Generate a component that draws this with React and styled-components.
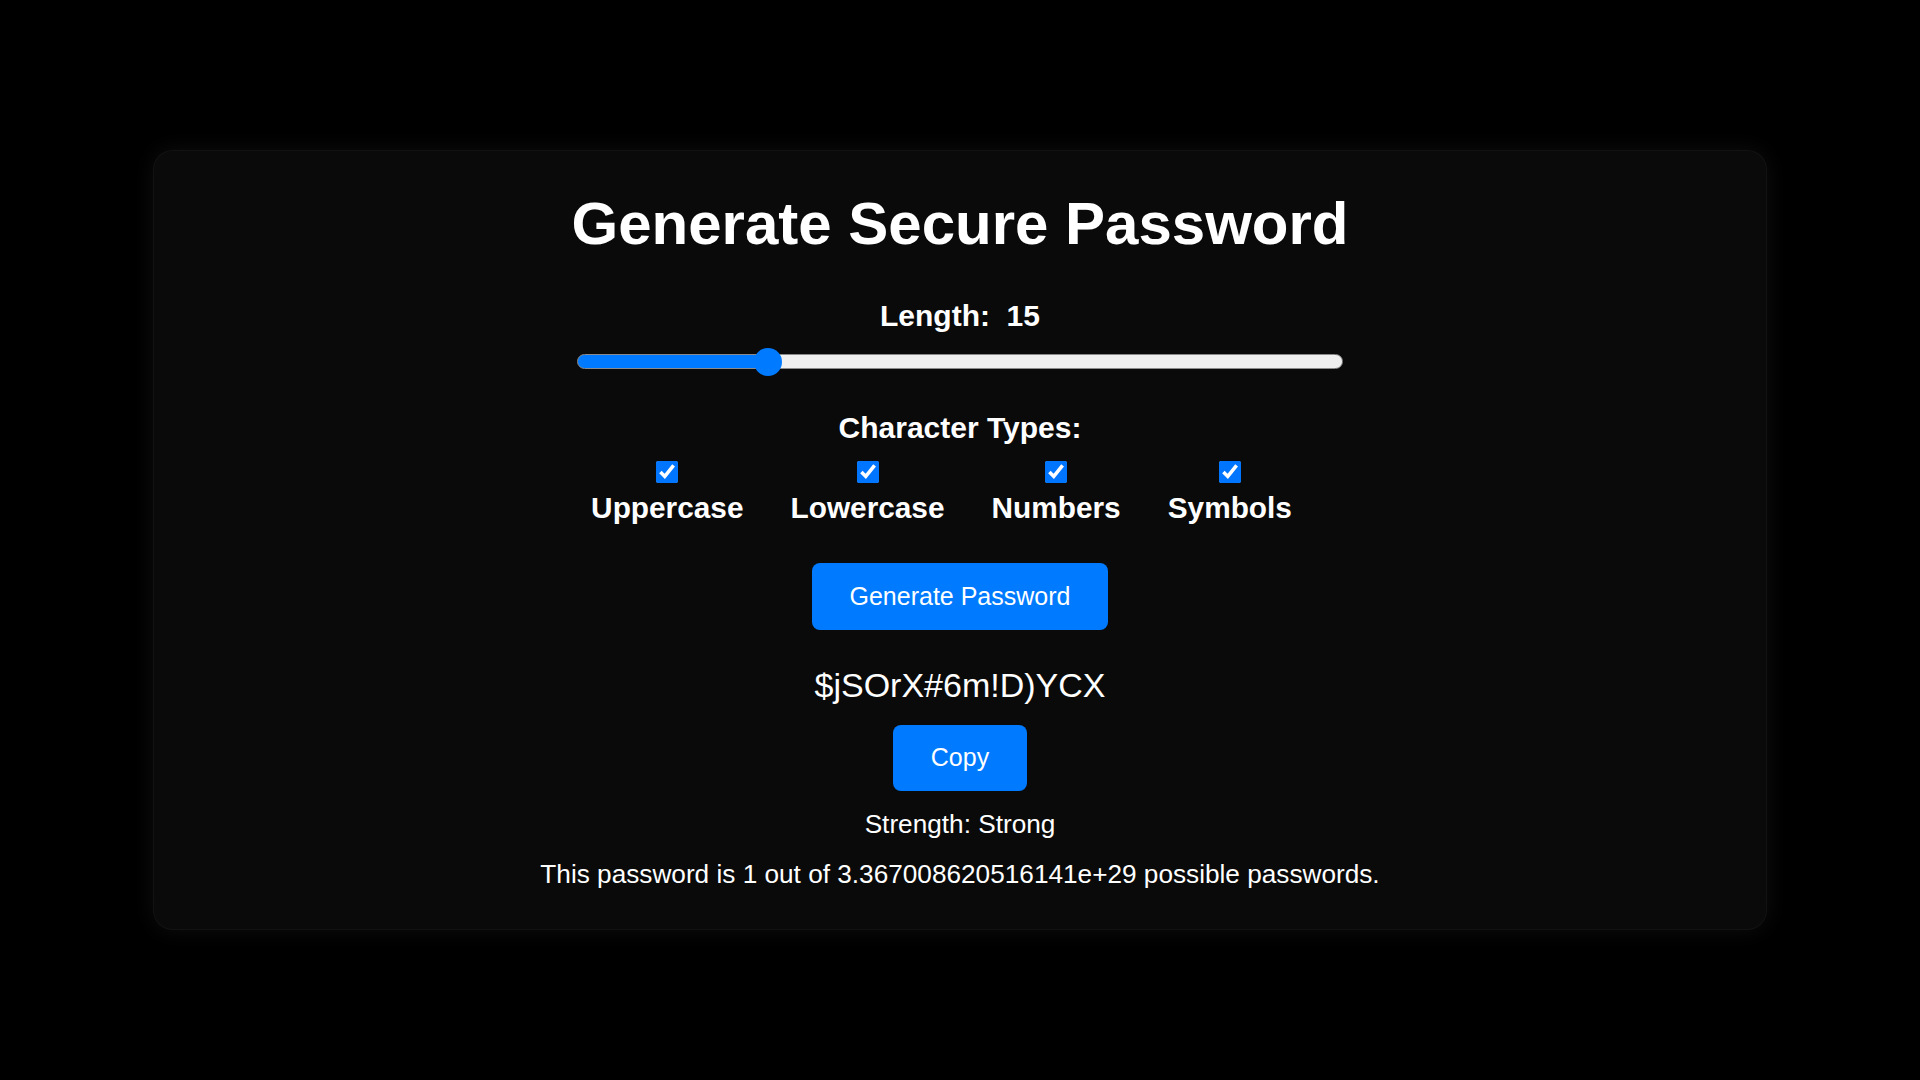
import React, { useState } from "react";
import styled, { createGlobalStyle } from "styled-components";

const GlobalStyle = createGlobalStyle`
  html, body {
    margin: 0;
    padding: 0;
    background: #000;
    color: #fff;
    font-family: "Liberation Sans", Arial, Helvetica, sans-serif;
  }
  * { box-sizing: border-box; }
`;

const Page = styled.div`
  min-height: 100vh;
  display: flex;
  align-items: center;
  justify-content: center;
`;

const Card = styled.div`
  width: 1614px;
  padding: 38px 40px 39px;
  background: #0a0a0a;
  border-radius: 20px;
  border: 1px solid rgba(255, 255, 255, 0.035);
  box-shadow: 0 0 22px rgba(255, 255, 255, 0.06);
  display: flex;
  flex-direction: column;
  align-items: center;
`;

const Title = styled.h1`
  margin: 0;
  font-size: 60px;
  font-weight: 700;
  line-height: normal;
`;

const Heading = styled.div`
  margin-top: ${(p) => p.$top}px;
  font-size: 30px;
  font-weight: 700;
  line-height: normal;
  white-space: pre;
`;

const Slider = styled.input`
  -webkit-appearance: none;
  appearance: none;
  display: block;
  width: 766px;
  height: 15px;
  margin: 21px 0 0;
  border-radius: 8px;
  border: 1px solid #8a8a8a;
  outline: none;
  background: ${(p) =>
    `linear-gradient(to right, #007bff ${p.$pct}%, #efefef ${p.$pct}%)`};

  &::-webkit-slider-thumb {
    -webkit-appearance: none;
    appearance: none;
    width: 28px;
    height: 28px;
    border-radius: 50%;
    background: #007bff;
    border: none;
    cursor: pointer;
  }
  &::-moz-range-thumb {
    width: 28px;
    height: 28px;
    border-radius: 50%;
    background: #007bff;
    border: none;
  }
`;

const OptionsRow = styled.div`
  margin-top: 16px;
  display: flex;
  justify-content: center;
  gap: 47px;
  padding-right: 37px;
`;

const Option = styled.label`
  display: flex;
  flex-direction: column;
  align-items: center;
  gap: 8px;
  font-size: 29.8px;
  font-weight: 700;
  line-height: normal;
  cursor: pointer;
`;

const Check = styled.input`
  width: 22px;
  height: 22px;
  margin: 0;
  accent-color: #0075ff;
`;

const Button = styled.button`
  margin-top: ${(p) => p.$top}px;
  font-family: "Liberation Sans", Arial, Helvetica, sans-serif;
  font-size: 25px;
  line-height: normal;
  padding: 0.75em 1.5em;
  border: none;
  border-radius: 8px;
  background: #007bff;
  color: #fff;
  cursor: pointer;
`;

const PasswordText = styled.div`
  margin-top: 36px;
  font-size: 34px;
  line-height: normal;
`;

const Info = styled.div`
  margin-top: ${(p) => p.$top}px;
  font-size: 26.2px;
  line-height: normal;
`;

const MIN = 4;
const MAX = 50;

export default function App() {
  const [length, setLength] = useState(15);
  const [opts, setOpts] = useState({
    Uppercase: true,
    Lowercase: true,
    Numbers: true,
    Symbols: true,
  });
  const pct = 24.9 + ((length - 15) / (MAX - MIN)) * 100 * 0.963;

  return (
    <>
      <GlobalStyle />
      <Page>
        <Card>
          <Title>Generate Secure Password</Title>
          <Heading $top={41}>{`Length:  ${length}`}</Heading>
          <Slider
            type="range"
            min={MIN}
            max={MAX}
            value={length}
            $pct={pct}
            onChange={(e) => setLength(Number(e.target.value))}
          />
          <Heading $top={42}>Character Types:</Heading>
          <OptionsRow>
            {Object.keys(opts).map((k) => (
              <Option key={k}>
                <Check
                  type="checkbox"
                  checked={opts[k]}
                  onChange={() => setOpts({ ...opts, [k]: !opts[k] })}
                />
                {k}
              </Option>
            ))}
          </OptionsRow>
          <Button $top={38}>Generate Password</Button>
          <PasswordText>$jSOrX#6m!D)YCX</PasswordText>
          <Button $top={20}>Copy</Button>
          <Info $top={18}>Strength: Strong</Info>
          <Info $top={19}>
            This password is 1 out of 3.367008620516141e+29 possible passwords.
          </Info>
        </Card>
      </Page>
    </>
  );
}
